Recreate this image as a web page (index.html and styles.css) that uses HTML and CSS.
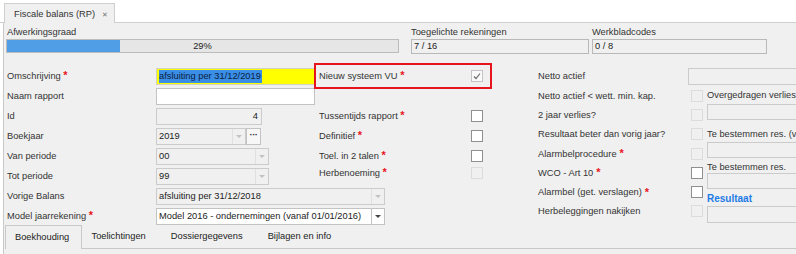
FILE: index.html
```html
<!DOCTYPE html>
<html lang="nl">
<head>
    <meta charset="UTF-8">
    <title>Fiscale balans (RP)</title>
    <link rel="stylesheet" href="styles.css">
</head>
<body>
    <div class="doc-tabs">
        <div class="doc-tab">Fiscale balans (RP) <span class="close">&#x2715;</span></div>
    </div>

    <div class="panel">
        <div class="stats">
            <div class="stat stat-progress">
                <div class="stat-label">Afwerkingsgraad</div>
                <div class="progress">
                    <div class="progress-fill" style="width: 29%"></div>
                    <span class="progress-text">29%</span>
                </div>
            </div>
            <div class="stat stat-count">
                <div class="stat-label">Toegelichte rekeningen</div>
                <div class="stat-box">7 / 16</div>
            </div>
            <div class="stat stat-codes">
                <div class="stat-label">Werkbladcodes</div>
                <div class="stat-box">0 / 8</div>
            </div>
        </div>

        <div class="form">
            <!-- linker kolom -->
            <div class="col col-left">
                <div class="row">
                    <label>Omschrijving <span class="req">*</span></label>
                    <div class="field field-yellow w-desc"><span class="sel">afsluiting per 31/12/2019</span></div>
                </div>
                <div class="row">
                    <label>Naam rapport</label>
                    <div class="field w-desc"></div>
                </div>
                <div class="row">
                    <label>Id</label>
                    <div class="field field-off w-id num">4</div>
                </div>
                <div class="row">
                    <label>Boekjaar</label>
                    <div class="combo-wrap">
                        <div class="field field-off combo w-year">2019<span class="arrow"></span></div>
                        <div class="dots-btn">&middot;&middot;&middot;</div>
                    </div>
                </div>
                <div class="row">
                    <label>Van periode</label>
                    <div class="field field-off combo w-period">00<span class="arrow"></span></div>
                </div>
                <div class="row">
                    <label>Tot periode</label>
                    <div class="field field-off combo w-period">99<span class="arrow"></span></div>
                </div>
                <div class="row">
                    <label>Vorige Balans</label>
                    <div class="field field-off combo w-long">afsluiting per 31/12/2018<span class="arrow"></span></div>
                </div>
                <div class="row">
                    <label>Model jaarrekening <span class="req">*</span></label>
                    <div class="field combo combo-on w-long">Model 2016 - ondernemingen (vanaf 01/01/2016)<span class="arrow"></span></div>
                </div>
            </div>

            <!-- middelste kolom -->
            <div class="col col-mid">
                <div class="check-row marked">
                    <label>Nieuw systeem VU <span class="req">*</span></label>
                    <span class="check check-done">
                        <svg width="10" height="10" viewBox="0 0 10 10"><polyline points="2,5.5 4,7.5 8,2.5" fill="none" stroke="#6b6b6b" stroke-width="1.2"/></svg>
                    </span>
                </div>
                <div class="check-row"></div>
                <div class="check-row">
                    <label>Tussentijds rapport <span class="req">*</span></label>
                    <span class="check"></span>
                </div>
                <div class="check-row">
                    <label>Definitief <span class="req">*</span></label>
                    <span class="check"></span>
                </div>
                <div class="check-row">
                    <label>Toel. in 2 talen <span class="req">*</span></label>
                    <span class="check"></span>
                </div>
                <div class="check-row tight">
                    <label>Herbenoeming <span class="req">*</span></label>
                    <span class="check check-off"></span>
                </div>
            </div>

            <!-- rechter kolom -->
            <div class="col col-right">
                <div class="row row-right">
                    <label>Netto actief</label>
                    <div class="field field-off w-open"></div>
                </div>
                <div class="right-body">
                    <div class="right-labels">
                        <div class="r-line">Netto actief &lt; wett. min. kap.</div>
                        <div class="r-line">2 jaar verlies?</div>
                        <div class="r-line">Resultaat beter dan vorig jaar?</div>
                        <div class="r-line">Alarmbelprocedure <span class="req">*</span></div>
                        <div class="r-line">WCO - Art 10 <span class="req">*</span></div>
                        <div class="r-line">Alarmbel (get. verslagen) <span class="req">*</span></div>
                        <div class="r-line">Herbeleggingen nakijken</div>
                    </div>
                    <div class="right-checks">
                        <div class="r-line"><span class="check check-off"></span></div>
                        <div class="r-line"><span class="check check-off"></span></div>
                        <div class="r-line"><span class="check check-off"></span></div>
                        <div class="r-line"><span class="check check-off"></span></div>
                        <div class="r-line"><span class="check"></span></div>
                        <div class="r-line"><span class="check"></span></div>
                        <div class="r-line"><span class="check check-off"></span></div>
                    </div>
                    <div class="right-extra">
                        <div class="x-label x-first">Overgedragen verlies</div>
                        <div class="field field-off x-box"></div>
                        <div class="x-label x-second">Te bestemmen res. (vorig jaar)</div>
                        <div class="field field-off x-box"></div>
                        <div class="x-label x-third">Te bestemmen res.</div>
                        <div class="field field-off x-box"></div>
                        <div class="x-label x-result">Resultaat</div>
                        <div class="field field-off x-box x-tall"></div>
                    </div>
                </div>
            </div>
        </div>

        <div class="subtabs">
            <div class="subtab active">Boekhouding</div>
            <div class="subtab">Toelichtingen</div>
            <div class="subtab">Dossiergegevens</div>
            <div class="subtab">Bijlagen en info</div>
        </div>
    </div>
</body>
</html>
```

FILE: styles.css
```css
body, html {
    margin: 0;
    padding: 0;
    height: 100%;
    background-color: #ffffff;
    font-family: 'Liberation Sans', Arial, sans-serif;
    font-size: 9.3px;
    color: #333333;
    overflow: hidden;
}
.doc-tabs {
    height: 22px;
    border-bottom: 1px solid #cfcfcf;
    padding-left: 4px;
    display: flex;
    align-items: flex-end;
}
.doc-tab {
    width: 111px;
    height: 20px;
    box-sizing: border-box;
    margin-bottom: -1px;
    padding: 5px 0 0 9px;
    background-color: #f0f0f0;
    border: 1px solid #cfcfcf;
    border-bottom: none;
}
.doc-tab .close {
    margin-left: 4px;
    font-size: 7px;
    color: #777777;
}
.panel {
    background-color: #f0f0f0;
    border-left: 1px solid #c9c9c9;
    margin-left: 3px;
    padding: 3px 0 0 2px;
    height: 100%;
}

/* afwerking */
.stats {
    display: flex;
}
.stat {
    flex-shrink: 0;
}
.stat-label {
    height: 13px;
    line-height: 12px;
}
.stat-progress .stat-label {
    padding-left: 1px;
}
.stat-progress {
    width: 393px;
    margin-right: 12px;
}
.stat-count {
    width: 178px;
    margin-right: 3px;
}
.stat-codes {
    width: 175px;
}
.progress {
    position: relative;
    height: 14px;
    border: 1px solid #bcbcbc;
    box-sizing: border-box;
    background-color: #e6e6e6;
}
.progress-fill {
    height: 100%;
    background-color: #4f9ee6;
}
.progress-text {
    position: absolute;
    left: 0;
    right: 0;
    top: 0;
    line-height: 12px;
    text-align: center;
    color: #222222;
}
.stat-box {
    height: 15px;
    line-height: 13px;
    border: 1px solid #b9b9b9;
    box-sizing: border-box;
    padding-left: 2px;
    color: #222222;
}

/* formulier */
.form {
    display: flex;
    margin-top: 12px;
    height: 159px;
}
.col {
    flex-shrink: 0;
}
.col-left {
    width: 310px;
}
.col-mid {
    width: 222px;
}
.col-right {
    width: 300px;
}
.row {
    display: grid;
    grid-template-columns: 150px auto;
    align-items: center;
    height: 20px;
}
.row label {
    padding-left: 1px;
    white-space: nowrap;
}
.req {
    color: #e8141c;
    font-weight: bold;
    font-size: 11px;
    line-height: 9px;
    vertical-align: top;
}
.field {
    height: 17px;
    box-sizing: border-box;
    border: 1px solid #c3c3c3;
    background-color: #ffffff;
    line-height: 15px;
    padding-left: 2px;
    white-space: nowrap;
    overflow: hidden;
    color: #222222;
}
.field-off {
    background-color: #f0f0f0;
    border-color: #cbcbcb;
}
.field-yellow {
    background-color: #ffff00;
    border-color: #d2d2c0;
}
.sel {
    background-color: #3a8ee6;
    color: #0d1d40;
    padding: 1px 1px 2px 0;
}
.num {
    text-align: right;
    padding-right: 3px;
}
.w-desc { width: 159px; }
.w-id { width: 106px; }
.w-year { width: 90px; }
.w-period { width: 113px; }
.w-long { width: 229px; }
.w-open { width: 120px; }

.combo {
    position: relative;
    padding-right: 16px;
}
.combo .arrow {
    position: absolute;
    right: 0;
    top: 0;
    width: 12px;
    height: 15px;
    border-left: 1px solid #e0e0e0;
}
.combo .arrow::after {
    content: '';
    position: absolute;
    left: 3px;
    top: 6px;
    border-left: 3px solid transparent;
    border-right: 3px solid transparent;
    border-top: 3px solid #c2c2c2;
}
.combo-on .arrow {
    border-left-color: #c3c3c3;
}
.combo-on .arrow::after {
    border-top-color: #444444;
}
.combo-wrap {
    display: flex;
}
.dots-btn {
    width: 15px;
    height: 17px;
    box-sizing: border-box;
    border: 1px solid #c3c3c3;
    background-color: #f7f7f7;
    text-align: center;
    line-height: 13px;
    font-weight: bold;
    color: #333333;
    letter-spacing: -0.5px;
}

/* vinkjes */
.check-row {
    display: grid;
    grid-template-columns: 152px 12px;
    align-items: center;
    width: 174px;
    height: 20px;
    padding-left: 3px;
    box-sizing: border-box;
}
.check-row.marked {
    outline: 2px solid #e8141c;
    outline-offset: 1px;
    width: 172px;
    margin-left: 1px;
    padding-left: 2px;
}
.check-row.tight {
    margin-top: -3px;
}
.check {
    display: block;
    width: 12px;
    height: 12px;
    box-sizing: border-box;
    border: 1px solid #8f8f8f;
    background-color: #ffffff;
}
.check-done {
    border-color: #c4c4c4;
    background-color: #fafafa;
}
.check-done svg {
    display: block;
}
.check-off {
    border-color: #dcdcdc;
    background-color: #f0f0f0;
}

/* rechter kolom */
.row-right label {
    padding-left: 0;
}
.right-body {
    display: flex;
}
.right-labels {
    width: 150px;
    flex-shrink: 0;
}
.right-checks {
    width: 19px;
    flex-shrink: 0;
}
.right-checks .check {
    margin-left: 3px;
}
.r-line {
    height: 19.3px;
    display: flex;
    align-items: center;
    white-space: nowrap;
}
.r-line .req {
    margin-left: 3px;
}
.right-extra {
    width: 120px;
    flex-shrink: 0;
}
.x-label {
    white-space: nowrap;
    line-height: 12px;
}
.x-first {
    height: 18px;
    line-height: 18px;
}
.x-box {
    height: 16px;
}
.x-second {
    margin-top: 6px;
    height: 16px;
    line-height: 16px;
}
.x-third {
    margin-top: 3px;
    height: 12px;
}
.x-result {
    margin-top: 3px;
    height: 14px;
    line-height: 14px;
    font-weight: bold;
    font-size: 10px;
    color: #1e7be6;
}
.x-tall {
    height: 17px;
}

/* tabbladen onderaan */
.subtabs {
    display: flex;
    height: 23px;
    border-bottom: 1px solid #c9c9c9;
    margin-left: 3px;
}
.subtab {
    padding: 0 12.5px;
    line-height: 22px;
    color: #222222;
}
.subtab.active {
    width: 77px;
    box-sizing: border-box;
    margin-left: -4px;
    margin-right: -3px;
    padding-left: 9px;
    border: 1px solid #c9c9c9;
    border-bottom: none;
    background-color: #f0f0f0;
    height: 24px;
}
```
